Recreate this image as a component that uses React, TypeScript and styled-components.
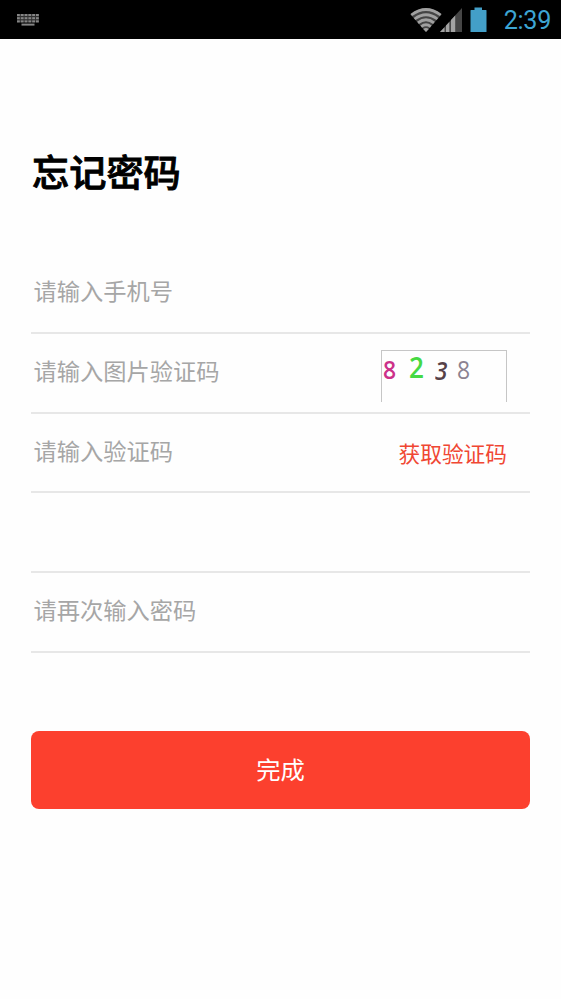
import React from "react";
import styled, { createGlobalStyle } from "styled-components";

const GlobalStyle = createGlobalStyle`
  *, *::before, *::after { box-sizing: border-box; }
  body { margin: 0; background: #fff; }
`;

const Screen = styled.div`
  width: 561px;
  height: 999px;
  display: flex;
  flex-direction: column;
  background: #fefefe;
  font-family: "Noto Sans CJK SC", sans-serif;
  overflow: hidden;
`;

const StatusBar = styled.header`
  height: 39px;
  flex: none;
  display: flex;
  align-items: center;
  justify-content: space-between;
  padding: 0 10px 0 16px;
  background: #000;
`;

const StatusIcons = styled.div`
  display: flex;
  align-items: center;
`;

const Clock = styled.span`
  margin-left: 17px;
  padding-top: 2px;
  font: 400 25.2px/37px Roboto, sans-serif;
  letter-spacing: -0.3px;
  color: #3da5d3;
`;

const Content = styled.main`
  display: flex;
  flex-direction: column;
  padding: 107px 31px 0;
`;

const Title = styled.h1`
  margin: 0 0 0 1px;
  font-size: 37.2px;
  line-height: 50px;
  font-weight: 500;
  -webkit-text-stroke: 0.9px #000;
  color: #000;
`;

const Form = styled.form`
  margin-top: 58px;
  display: grid;
  grid-template-rows: repeat(5, 79.8px);
`;

const Field = styled.label`
  display: flex;
  justify-content: space-between;
  padding: 0 23px 0 2.5px;
  border-bottom: 2px solid #e7e7e7;
`;

const Placeholder = styled.span`
  padding-top: 19px;
  font-size: 23.25px;
  line-height: 34px;
  color: #a6a6a6;
`;

const Captcha = styled.div`
  width: 126px;
  height: 52px;
  margin-top: 16px;
  padding-left: 1px;
  display: flex;
  border: 1px solid #c6c6c6;
  border-bottom: 0;
`;

const Digit = styled.span<{
  $color: string;
  $size: number;
  $width: number;
  $weight: number;
  $top: number;
  $slant?: boolean;
}>`
  width: ${(p) => p.$width}px;
  padding-top: ${(p) => p.$top}px;
  font-family: "Open Sans", sans-serif;
  font-size: ${(p) => p.$size}px;
  line-height: 30px;
  font-weight: ${(p) => p.$weight};
  font-style: ${(p) => (p.$slant ? "italic" : "normal")};
  color: ${(p) => p.$color};
  transform: scaleX(0.9);
  transform-origin: left;
`;

const CodeLink = styled.span`
  padding-top: 23px;
  font-size: 21.7px;
  line-height: 32px;
  color: #f04733;
`;

const Submit = styled.button`
  height: 78px;
  margin-top: 78px;
  padding: 0 0 2px;
  border: 0;
  border-radius: 8px;
  background: #fc402e;
  color: #fff;
  font-family: inherit;
  font-size: 24.3px;
  line-height: 36px;
`;

const KeyboardIcon = () => (
  <svg width="24" height="14" viewBox="0 0 24 14" fill="#858585">
    <rect x="1" y="1" width="22" height="8.5" fill="#303030" />
    {[0, 1, 2, 3, 4, 5].map((i) => (
      <React.Fragment key={i}>
        <rect x={1 + i * 3.8} y="1" width="2.8" height="2" />
        <rect x={1 + i * 3.8} y="4.2" width="2.8" height="2" />
        <rect x={1 + i * 3.8} y="7.4" width="2.8" height="2" />
      </React.Fragment>
    ))}
    <rect x="5.5" y="10.6" width="13" height="2" />
  </svg>
);

const Wifi = styled.svg`
  margin-right: -2px;
`;

const WifiIcon = () => (
  <Wifi width="32" height="26" viewBox="0 0 32 26">
    <path d="M0.5 7.4Q16-4.8 31.5 7.4L16 25Z" fill="#444" />
    <g fill="none" stroke="#a0a0a0" strokeWidth="2.8">
      <path d="M1.3 8Q16-3 30.7 8" />
      <path d="M4.6 12Q16 3.4 27.4 12" />
      <path d="M8 15.9Q16 9.6 24 15.9" />
      <path d="M11.2 19.6Q16 16 20.8 19.6" />
    </g>
    <path d="M13.2 21.9Q16 20 18.8 21.9L16 25Z" fill="#a0a0a0" />
  </Wifi>
);

const SignalIcon = () => (
  <svg width="22" height="26" viewBox="0 0 22 26">
    <path d="M0 25L22 1V25Z" fill="#464646" />
    <path
      d="M0 25L4.5 20.2V25ZM6 25V18.5L9.3 14.9V25ZM11 25V13L15.2 8.4V25Z"
      fill="#a3a3a3"
    />
  </svg>
);

const Battery = styled.svg`
  margin-left: 8px;
`;

export default function App() {
  return (
    <>
      <GlobalStyle />
      <Screen>
        <StatusBar>
          <KeyboardIcon />
          <StatusIcons>
            <WifiIcon />
            <SignalIcon />
            <Battery width="17" height="26" viewBox="0 0 17 26">
              <path
                d="M4.5 0.5H12V3H16Q16.5 3 16.5 3.5V25H0.5V3.5Q0.5 3 1 3H4.5Z"
                fill="#439fc8"
              />
            </Battery>
            <Clock>2:39</Clock>
          </StatusIcons>
        </StatusBar>
        <Content>
          <Title>忘记密码</Title>
          <Form>
            <Field>
              <Placeholder>请输入手机号</Placeholder>
            </Field>
            <Field>
              <Placeholder>请输入图片验证码</Placeholder>
              <Captcha>
                <Digit $color="#cc3189" $size={25.5} $width={26} $weight={600} $top={3}>8</Digit>
                <Digit $color="#45d943" $size={29} $width={26} $weight={600} $top={1}>2</Digit>
                <Digit $color="#554148" $size={25} $width={22} $weight={600} $top={4} $slant>3</Digit>
                <Digit $color="#8c8290" $size={25.5} $width={20} $weight={400} $top={3}>8</Digit>
              </Captcha>
            </Field>
            <Field>
              <Placeholder>请输入验证码</Placeholder>
              <CodeLink>获取验证码</CodeLink>
            </Field>
            <Field />
            <Field>
              <Placeholder>请再次输入密码</Placeholder>
            </Field>
          </Form>
          <Submit type="button">完成</Submit>
        </Content>
      </Screen>
    </>
  );
}
